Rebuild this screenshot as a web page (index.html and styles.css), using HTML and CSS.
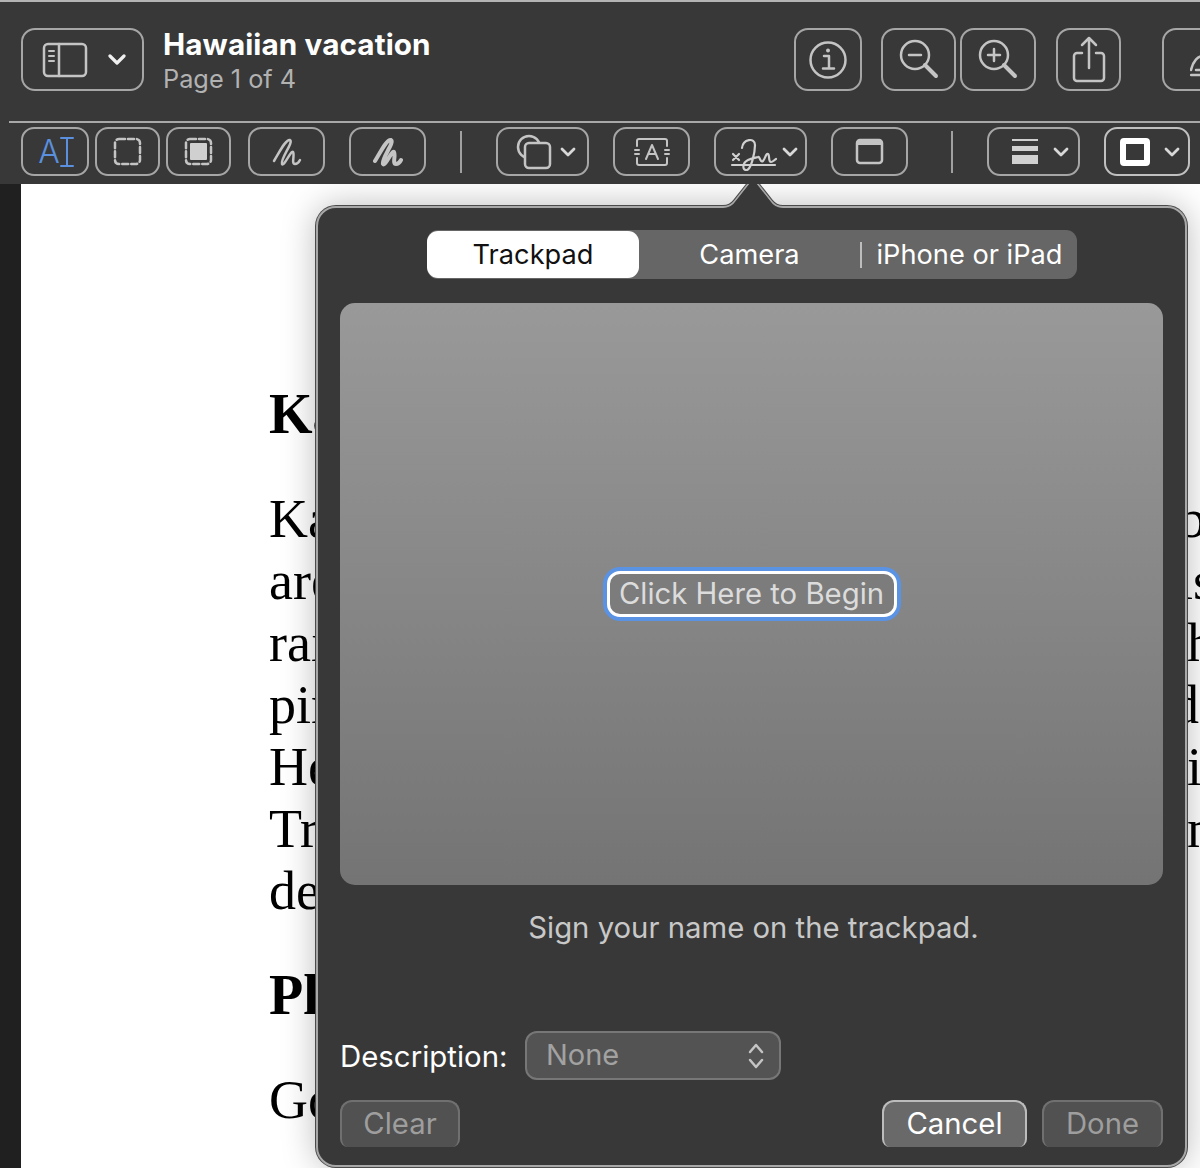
FILE: index.html
```html
<!DOCTYPE html>
<html lang="en">
<head>
<meta charset="utf-8">
<title>Hawaiian vacation</title>
<link rel="stylesheet" href="styles.css">
</head>
<body>
<header class="toolbar">
  <div class="row-main">
    <button class="tb tb-sidebar">
      <svg class="ic" width="46" height="36" viewBox="0 0 46 36"><rect x="2" y="2" width="42" height="32" rx="4"/><path d="M17 2v32"/><path class="thin" d="M7 9h5M7 14h5M7 19h5"/></svg>
      <svg class="chev" width="18" height="12" viewBox="0 0 18 12"><path d="M2 2l7 7 7-7"/></svg>
    </button>
    <div class="doc-title">
      <div class="doc-name">Hawaiian vacation</div>
      <div class="doc-page">Page 1 of 4</div>
    </div>
    <div class="main-right">
      <button class="tb tb-info">
        <svg class="ic" width="40" height="40" viewBox="0 0 40 40"><circle cx="20" cy="20" r="17.500"/><path d="M16 16h5v12M15 28.500h11"/><circle class="fill" cx="20" cy="10.500" r="2"/></svg>
      </button>
      <button class="tb tb-zoomout">
        <svg class="ic" width="40" height="44" viewBox="0 0 40 44"><circle cx="16" cy="17" r="14"/><path class="heavy" d="M26 27l11 11"/><path d="M10 17h12"/></svg>
      </button>
      <button class="tb tb-zoomin">
        <svg class="ic" width="40" height="44" viewBox="0 0 40 44"><circle cx="16" cy="17" r="14"/><path class="heavy" d="M26 27l11 11"/><path d="M10 17h12M16 11v12"/></svg>
      </button>
      <button class="tb tb-share">
        <svg class="ic" width="36" height="50" viewBox="0 0 36 50"><path d="M11 18H6a3 3 0 0 0-3 3v22a3 3 0 0 0 3 3h24a3 3 0 0 0 3-3V21a3 3 0 0 0-3-3h-5"/><path d="M18 33V3M11 10l7-7 7 7"/></svg>
      </button>
      <button class="tb tb-markup">
        <svg class="ic" width="30" height="34" viewBox="0 0 30 34"><path d="M1 27C3 18 8 13 13 13"/><path d="M6 27h10"/><path d="M1 32h29"/></svg>
      </button>
    </div>
  </div>
  <div class="row-tools">
    <button class="tb t-ai"><span class="ai-a">A</span><svg class="ibeam" width="14" height="32" viewBox="0 0 14 32"><path d="M1 2h12M1 30h12M7 2v28"/></svg></button>
    <button class="tb t-sel">
      <svg class="ic" width="29" height="29" viewBox="0 0 29 29"><rect class="dash" x="2" y="2" width="25" height="25" rx="4"/></svg>
    </button>
    <button class="tb t-sel t-after">
      <svg class="ic" width="29" height="29" viewBox="0 0 29 29"><rect class="dash" x="2" y="2" width="25" height="25" rx="4"/><rect class="solid" x="6" y="6" width="17" height="17" rx="1"/></svg>
    </button>
    <button class="tb t-draw t-sketch">
      <svg class="ic" width="30" height="30" viewBox="0 0 30 30"><path d="M2 24C8 14 14 2 18 3c4 2-10 19-8 24 2 3 9-14 11-12 2 3-2 12 2 12 2 0 4-2 5-4"/></svg>
    </button>
    <button class="tb t-draw t-pen">
      <svg class="ic bold" width="30" height="30" viewBox="0 0 30 30"><path d="M2 24C8 14 14 2 18 3c4 2-10 19-8 24 2 3 9-14 11-12 2 3-2 12 2 12 2 0 4-2 5-4"/></svg>
    </button>
    <span class="sep sep-a"></span>
    <button class="tb t-shapes">
      <svg class="ic" width="36" height="36" viewBox="0 0 36 36"><circle cx="13" cy="13" r="11"/><rect class="cover" x="9" y="9" width="25" height="25" rx="4"/></svg>
      <svg class="chev small" width="16" height="10" viewBox="0 0 16 10"><path d="M2 2l6 6 6-6"/></svg>
    </button>
    <button class="tb t-text">
      <svg class="ic slim" width="36" height="30" viewBox="0 0 36 30"><path d="M3 9V4a2 2 0 0 1 2-2h26a2 2 0 0 1 2 2v5M3 21v5a2 2 0 0 0 2 2h26a2 2 0 0 0 2-2v-5M1 13h4M1 17h4M31 13h4M31 17h4"/><path d="M12 22l6-14 6 14M14.500 17h7"/></svg>
    </button>
    <button class="tb t-sign">
      <svg class="ic sig" width="48" height="38" viewBox="0 0 48 38"><path d="M3 21l6 6M9 21l-6 6"/><path d="M2 32h43"/><path d="M12 15C13 6 25 4 25 12C25 20 21 36 17 37C12 38 12 30 18 27C22 25 25 25 28 24C30 23 30 30 33 28C35 26 36 20 38 21C40 22 38 29 41 29C43 29 44 27 46 26"/></svg>
      <svg class="chev small" width="16" height="10" viewBox="0 0 16 10"><path d="M2 2l6 6 6-6"/></svg>
    </button>
    <button class="tb t-window">
      <svg class="ic" width="29" height="27" viewBox="0 0 29 27"><rect x="2" y="2" width="25" height="23" rx="3"/><path class="heavy" d="M3 5h23"/></svg>
    </button>
    <span class="sep sep-b"></span>
    <button class="tb t-lines">
      <svg class="lines" width="26" height="25" viewBox="0 0 26 25"><rect y="0" width="26" height="2"/><rect y="7" width="26" height="5"/><rect y="16" width="26" height="9"/></svg>
      <svg class="chev small" width="16" height="10" viewBox="0 0 16 10"><path d="M2 2l6 6 6-6"/></svg>
    </button>
    <button class="tb t-border">
      <svg class="boxico" width="30" height="28" viewBox="0 0 30 28"><rect x="3" y="3" width="24" height="22" rx="1"/></svg>
      <svg class="chev small" width="16" height="10" viewBox="0 0 16 10"><path d="M2 2l6 6 6-6"/></svg>
    </button>
  </div>
</header>

<main class="viewer">
  <div class="gutter"></div>
  <article class="page">
    <h2 class="page-head">Kauai</h2>
    <div class="para">
      <p class="line"><span class="l">Kauai</span><span class="r r-b">b</span></p>
      <p class="line"><span class="l">are</span><span class="r r-s">is</span></p>
      <p class="line"><span class="l">rain</span><span class="r">h</span></p>
      <p class="line"><span class="l">pine</span><span class="r r-d">d</span></p>
      <p class="line"><span class="l">Hello</span><span class="r">i</span></p>
      <p class="line"><span class="l">Trail</span><span class="r">n</span></p>
      <p class="line"><span class="l">destination</span></p>
    </div>
    <h2 class="page-head">Planning</h2>
    <p class="line line-go"><span class="l">Go</span></p>
  </article>

  <section class="popover">
    <svg class="arrow" width="76" height="34" viewBox="0 0 76 34"><path class="arrow-dark" d="M0 30h8c6 0 9-2 12-6L35 5c2-3 4-3 6 0l15 19c3 4 6 6 12 6h8"/><path class="arrow-line" d="M0 30h8c6 0 9-2 12-6L35 5c2-3 4-3 6 0l15 19c3 4 6 6 12 6h8"/><path class="arrow-fill" d="M0 34V31h8c6 0 9-2 12-6L35 6c2-3 4-3 6 0l15 19c3 4 6 6 12 6h8v3z"/></svg>
    <div class="segments">
      <button class="seg seg-on">Trackpad</button>
      <button class="seg seg-cam">Camera</button>
      <span class="seg-div"></span>
      <button class="seg seg-ios">iPhone or iPad</button>
    </div>
    <div class="pad">
      <button class="begin">Click Here to Begin</button>
    </div>
    <p class="hint">Sign your name on the trackpad.</p>
    <div class="desc-row">
      <label class="desc-label">Description:</label>
      <div class="select">
        <span class="select-value">None</span>
        <svg class="updown" width="18" height="28" viewBox="0 0 18 28"><path d="M3 10l6-7 6 7M3 18l6 7 6-7"/></svg>
      </div>
    </div>
    <div class="actions">
      <button class="act act-clear">Clear</button>
      <button class="act act-cancel">Cancel</button>
      <button class="act act-done">Done</button>
    </div>
  </section>
</main>
</body>
</html>
```

FILE: styles.css
```css
* { box-sizing: border-box; }
html, body { margin: 0; padding: 0; }
body {
  width: 1200px;
  height: 1168px;
  overflow: hidden;
  background: #fff;
  font-family: Inter, "Noto Sans", sans-serif;
}
button { font-family: inherit; padding: 0; margin: 0; }

.toolbar {
  height: 184px;
  background: #383838;
  border-top: 2px solid #b4b4b4;
  overflow: hidden;
}
.row-main {
  display: flex;
  align-items: flex-start;
  height: 119px;
  padding: 26px 0 0 21px;
}
.tb {
  display: flex;
  align-items: center;
  justify-content: center;
  flex: none;
  background: transparent;
  border: 2px solid #a6a6a6;
  border-radius: 14px;
  height: 63px;
  color: #c8c8c8;
}
.ic { fill: none; stroke: #c4c4c4; stroke-width: 2.500; stroke-linecap: round; stroke-linejoin: round; flex: none; }
.ic .thin { stroke-width: 2; }
.ic .heavy { stroke-width: 4; }
.ic .fill { fill: #c4c4c4; stroke: none; }
.ic.bold { stroke-width: 4; }
.ic.slim { stroke-width: 2; }
.ic.sig { stroke-width: 2.200; stroke: #d0d0d0; }
.ic .dash { stroke-dasharray: 6 3; stroke-width: 2.500; }
.ic .solid { fill: #d0d0d0; stroke: none; }
.ic .cover { fill: #383838; }
.chev { fill: none; stroke: #f0f0f0; stroke-width: 3.200; stroke-linecap: round; stroke-linejoin: round; flex: none; }
.chev.small { stroke: #d8d8d8; stroke-width: 2.800; }

.tb-sidebar { width: 123px; gap: 20px; padding-left: 2px; }
.doc-title { margin-left: 19px; margin-top: -1px; }
.doc-name { font-size: 29.700px; font-weight: 700; line-height: 34px; color: #fff; letter-spacing: 0.1px; }
.doc-page { font-size: 25.300px; line-height: 32px; color: #b2b2b2; margin-top: 2px; }
.main-right { display: flex; margin-left: auto; margin-right: -22px; }
.tb-info { width: 68px; }
.tb-zoomout { width: 75px; margin-left: 19px; }
.tb-zoomin { width: 76px; margin-left: 4px; }
.tb-share { width: 65px; margin-left: 20px; }
.tb-markup { width: 60px; margin-left: 41px; justify-content: flex-end; }

.row-tools {
  display: flex;
  align-items: center;
  height: 63px;
  margin-left: 9px;
  padding: 5px 0 9px 12px;
  border-top: 2px solid #a8a8a8;
}
.row-tools .tb { height: 49px; border-radius: 13px; }
.t-ai { width: 68px; padding-left: 2px; }
.ai-a { font-size: 32px; font-weight: 300; color: #5a90de; line-height: 1; }
.ibeam { fill: none; stroke: #5a90de; stroke-width: 2; stroke-linecap: round; flex: none; }
.t-sel { width: 65px; margin-left: 6px; }
.t-draw { width: 77px; }
.t-sketch { margin-left: 17px; }
.t-pen { margin-left: 24px; }
.sep { width: 2px; height: 42px; background: #a0a0a0; flex: none; }
.sep-a { margin-left: 34px; }
.t-shapes { width: 93px; margin-left: 34px; gap: 8px; padding-left: 6px; }
.t-text { width: 77px; margin-left: 24px; }
.t-sign { width: 93px; margin-left: 24px; gap: 4px; padding-left: 6px; }
.t-window { width: 77px; margin-left: 24px; }
.sep-b { margin-left: 43px; }
.t-lines { width: 93px; margin-left: 34px; gap: 15px; padding-left: 14px; }
.lines { fill: #d0d0d0; flex: none; }
.t-border { width: 86px; margin-left: 24px; gap: 14px; padding-left: 6px; border-color: #c0c0c0; }
.boxico { fill: none; stroke: #fff; stroke-width: 6; flex: none; }

.viewer {
  position: relative;
  display: flex;
  height: 984px;
  overflow: hidden;
}
.gutter { width: 21px; flex: none; background: #202020; }
.page {
  flex: 1;
  padding: 199px 0 0 248px;
  font-family: "Liberation Serif", "Times New Roman", serif;
  color: #000;
  font-size: 54px;
  line-height: 62px;
}
.page-head {
  margin: 0;
  font-size: 56px;
  line-height: 62px;
  font-weight: 700;
}
.para { margin: 43px 0 42px; }
.line {
  display: grid;
  grid-template-columns: 918px auto;
  margin: 0;
  white-space: nowrap;
}
.line-go { margin-top: 43px; }
.l { overflow: hidden; }
.r-b { margin-left: -8px; }
.r-s { margin-left: -9px; }
.r-d { margin-left: -15px; }

.popover {
  position: absolute;
  left: 316px;
  top: 22px;
  width: 871px;
  height: 961px;
  padding: 22px 22px 0;
  background: #383838;
  border: 2px solid #a8a8a8;
  border-radius: 20px;
  box-shadow: 0 0 0 1px #4a4a4a, 0 0 34px rgba(0, 0, 0, 0.28);
}
.arrow { position: absolute; left: 397px; top: -31px; overflow: visible; }
.arrow-dark { fill: none; stroke: #4a4a4a; stroke-width: 4; }
.arrow-line { fill: none; stroke: #a8a8a8; stroke-width: 2; }
.arrow-fill { fill: #383838; stroke: none; }

.segments {
  display: flex;
  align-items: center;
  width: 650px;
  height: 49px;
  margin-left: 87px;
  background: #666;
  border-radius: 11px;
}
.seg {
  flex: none;
  height: 47px;
  border: 0;
  background: transparent;
  color: #fff;
  font-size: 27.200px;
  line-height: 47px;
}
.seg-on { width: 212px; background: #fff; color: #111; border-radius: 11px; }
.seg-cam { width: 221px; }
.seg-div { width: 2px; height: 26px; background: #bdbdbd; flex: none; }
.seg-ios { width: 215px; text-align: center; }

.pad {
  display: flex;
  align-items: center;
  justify-content: center;
  height: 582px;
  margin-top: 24px;
  border-radius: 15px;
  background: linear-gradient(#999, #747474);
}
.begin {
  width: 290px;
  height: 46px;
  margin-bottom: 1px;
  background: #7c7c7c;
  border: 3px solid #fff;
  border-radius: 13px;
  box-shadow: 0 0 0 4px #5a92e4;
  color: #dcdcdc;
  font-size: 29.300px;
}

.hint {
  margin: 23px 0 0;
  padding-left: 4px;
  text-align: center;
  height: 40px;
  line-height: 40px;
  font-size: 29.300px;
  color: #c8c8c8;
}
.desc-row {
  display: flex;
  align-items: center;
  height: 49px;
  margin-top: 83px;
}
.desc-label { font-size: 29.400px; color: #fff; width: 185px; flex: none; padding-top: 2px; }
.select {
  display: flex;
  align-items: center;
  justify-content: space-between;
  width: 256px;
  height: 49px;
  padding: 0 14px 0 19px;
  background: #535353;
  border: 2px solid #777;
  border-radius: 12px;
  color: #a2a2a2;
  font-size: 29px;
}
.select-value { padding-bottom: 3px; }
.updown { fill: none; stroke: #c4c4c4; stroke-width: 2.500; stroke-linecap: round; stroke-linejoin: round; }

.actions {
  display: flex;
  align-items: flex-start;
  height: 47px;
  margin-top: 20px;
}
.act {
  height: 47px;
  padding-bottom: 2px;
  background: #515151;
  border: 2px solid #707070;
  border-bottom: 0;
  border-radius: 12px 12px 8px 8px;
  color: #9e9e9e;
  font-size: 29.300px;
  flex: none;
}
.act-clear { width: 120px; }
.act-cancel {
  width: 145px;
  margin-left: auto;
  background: #696969;
  border-color: #bcbcbc;
  color: #fff;
}
.act-done { width: 121px; margin-left: 15px; }
```
